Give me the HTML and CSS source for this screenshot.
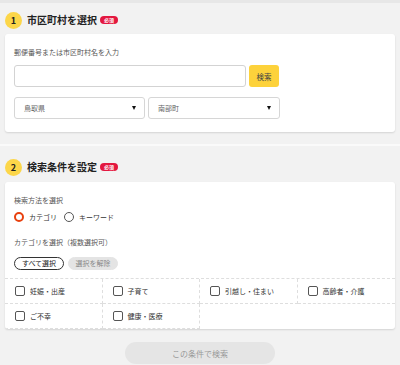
FILE: index.html
```html
<!DOCTYPE html>
<html lang="ja">
<head>
	<meta charset="UTF-8">
	<title>市区町村を選択</title>
	<link rel="stylesheet" href="styles.css">
</head>
<body>
	<section class="step step-first">
		<h2 class="step-title">
			<span class="num">1</span>
			<span class="title">市区町村を選択</span>
			<span class="req">必須</span>
		</h2>
		<div class="card">
			<div class="card-body area">
				<p class="label">郵便番号または市区町村名を入力</p>
				<div class="search-row">
					<input class="text" type="text">
					<button class="btn-search">検索</button>
				</div>
				<div class="select-row">
					<div class="select"><span>鳥取県</span></div>
					<div class="select"><span>南部町</span></div>
				</div>
			</div>
		</div>
	</section>

	<section class="step">
		<h2 class="step-title">
			<span class="num">2</span>
			<span class="title">検索条件を設定</span>
			<span class="req">必須</span>
		</h2>
		<div class="card">
			<div class="card-body cond">
				<p class="label">検索方法を選択</p>
				<div class="radios">
					<span class="radio on"></span><span class="radio-text">カテゴリ</span>
					<span class="radio"></span><span class="radio-text">キーワード</span>
				</div>
				<p class="label label-cat">カテゴリを選択（複数選択可）</p>
				<div class="pills">
					<span class="pill pill-all">すべて選択</span>
					<span class="pill pill-clear">選択を解除</span>
				</div>
			</div>
			<ul class="cats">
				<li><span class="check"></span>妊娠・出産</li>
				<li><span class="check"></span>子育て</li>
				<li><span class="check"></span>引越し・住まい</li>
				<li><span class="check"></span>高齢者・介護</li>
				<li><span class="check"></span>ご不幸</li>
				<li><span class="check"></span>健康・医療</li>
			</ul>
		</div>
		<div class="submit-row">
			<button class="btn-submit">この条件で検索</button>
		</div>
	</section>
</body>
</html>
```

FILE: styles.css
```css
* {
	margin: 0;
	padding: 0;
	box-sizing: border-box;
}
body {
	background: #f2f2f2;
	border-top: 3px solid #e7e7e7;
	font-family: "Noto Sans CJK JP", "Noto Sans", sans-serif;
	color: #333;
}
.step {
	padding: 0 5px 12px;
}
.step + .step {
	border-top: 2px solid #fafafa;
}
.step-title {
	display: flex;
	align-items: center;
	height: 36px;
	padding: 13px 0 7px;
}
.step-first .step-title {
	height: 31px;
	padding: 9px 0 6px;
}
.num {
	width: 17px;
	height: 17px;
	border-radius: 50%;
	background: #fcd649;
	font-size: 9px;
	font-weight: bold;
	color: #222;
	display: flex;
	align-items: center;
	justify-content: center;
}
.title {
	margin-left: 5px;
	font-size: 10px;
	font-weight: bold;
	color: #222;
	line-height: 16px;
}
.req {
	margin-left: 3px;
	height: 8px;
	width: 18px;
	border-radius: 4px;
	background: #e3173f;
	color: #fff;
	font-size: 5px;
	line-height: 8px;
	text-align: center;
	font-weight: bold;
}
.card {
	background: #fff;
	border-radius: 3px;
	box-shadow: 0 1px 2px rgba(0, 0, 0, 0.13);
	overflow: hidden;
}
.card-body {
	padding: 12px 9px 13px;
}
.label {
	font-size: 7px;
	line-height: 13px;
	color: #555;
}
.search-row {
	display: flex;
	margin-top: 6px;
}
input.text {
	width: 232px;
	height: 22px;
	border: 1px solid #d3d3d3;
	border-radius: 3px;
}
.btn-search {
	width: 30px;
	height: 22px;
	margin-left: 3px;
	border: none;
	border-radius: 3px;
	background: #fdd23b;
	font-family: inherit;
	font-size: 7.5px;
	color: #444;
}
.select-row {
	display: flex;
	gap: 3px;
	margin-top: 10px;
}
.select {
	width: 131px;
	height: 22px;
	border: 1px solid #d6d6d6;
	border-radius: 3px;
	display: flex;
	align-items: center;
	justify-content: space-between;
	padding: 0 8px 0 9px;
	font-size: 7px;
	color: #666;
}
.select + .select {
	width: 132px;
}
.select::after {
	content: "";
	border-left: 2.5px solid transparent;
	border-right: 2.5px solid transparent;
	border-top: 4px solid #111;
}
.cond {
	padding-bottom: 8px;
}
.radios {
	display: flex;
	align-items: center;
	height: 14px;
	margin-top: 3px;
}
.radio {
	width: 10px;
	height: 10px;
	border-radius: 50%;
	border: 1px solid #555;
}
.radio.on {
	border: 2.5px solid #e8410f;
}
.radio-text {
	margin: 0 7px 0 5px;
	font-size: 7px;
	color: #333;
}
.label-cat {
	margin-top: 12px;
}
.pills {
	display: flex;
	gap: 4px;
	margin-top: 8px;
}
.pill {
	width: 50px;
	height: 13px;
	border-radius: 7px;
	font-size: 7px;
	line-height: 11px;
	text-align: center;
}
.pill-all {
	border: 1px solid #333;
	color: #222;
}
.pill-clear {
	border: 1px solid #e4e4e4;
	background: #e4e4e4;
	color: #888;
}
.cats {
	list-style: none;
	display: grid;
	grid-template-columns: repeat(4, 1fr);
	border-top: 1px dashed #dedede;
}
.cats li {
	display: flex;
	align-items: center;
	height: 25px;
	padding-left: 10px;
	border-right: 1px dashed #dedede;
	border-bottom: 1px dashed #dedede;
	font-size: 7px;
	color: #333;
}
.cats li:nth-child(4n) {
	border-right: none;
}
.check {
	width: 10px;
	height: 10px;
	border: 1px solid #555;
	border-radius: 2px;
	margin-right: 5px;
}
.submit-row {
	display: flex;
	justify-content: center;
	margin-top: 13px;
}
.btn-submit {
	width: 150px;
	height: 22px;
	border: none;
	border-radius: 11px;
	background: #e5e5e5;
	color: #999;
	font-family: inherit;
	font-size: 8px;
}
```
